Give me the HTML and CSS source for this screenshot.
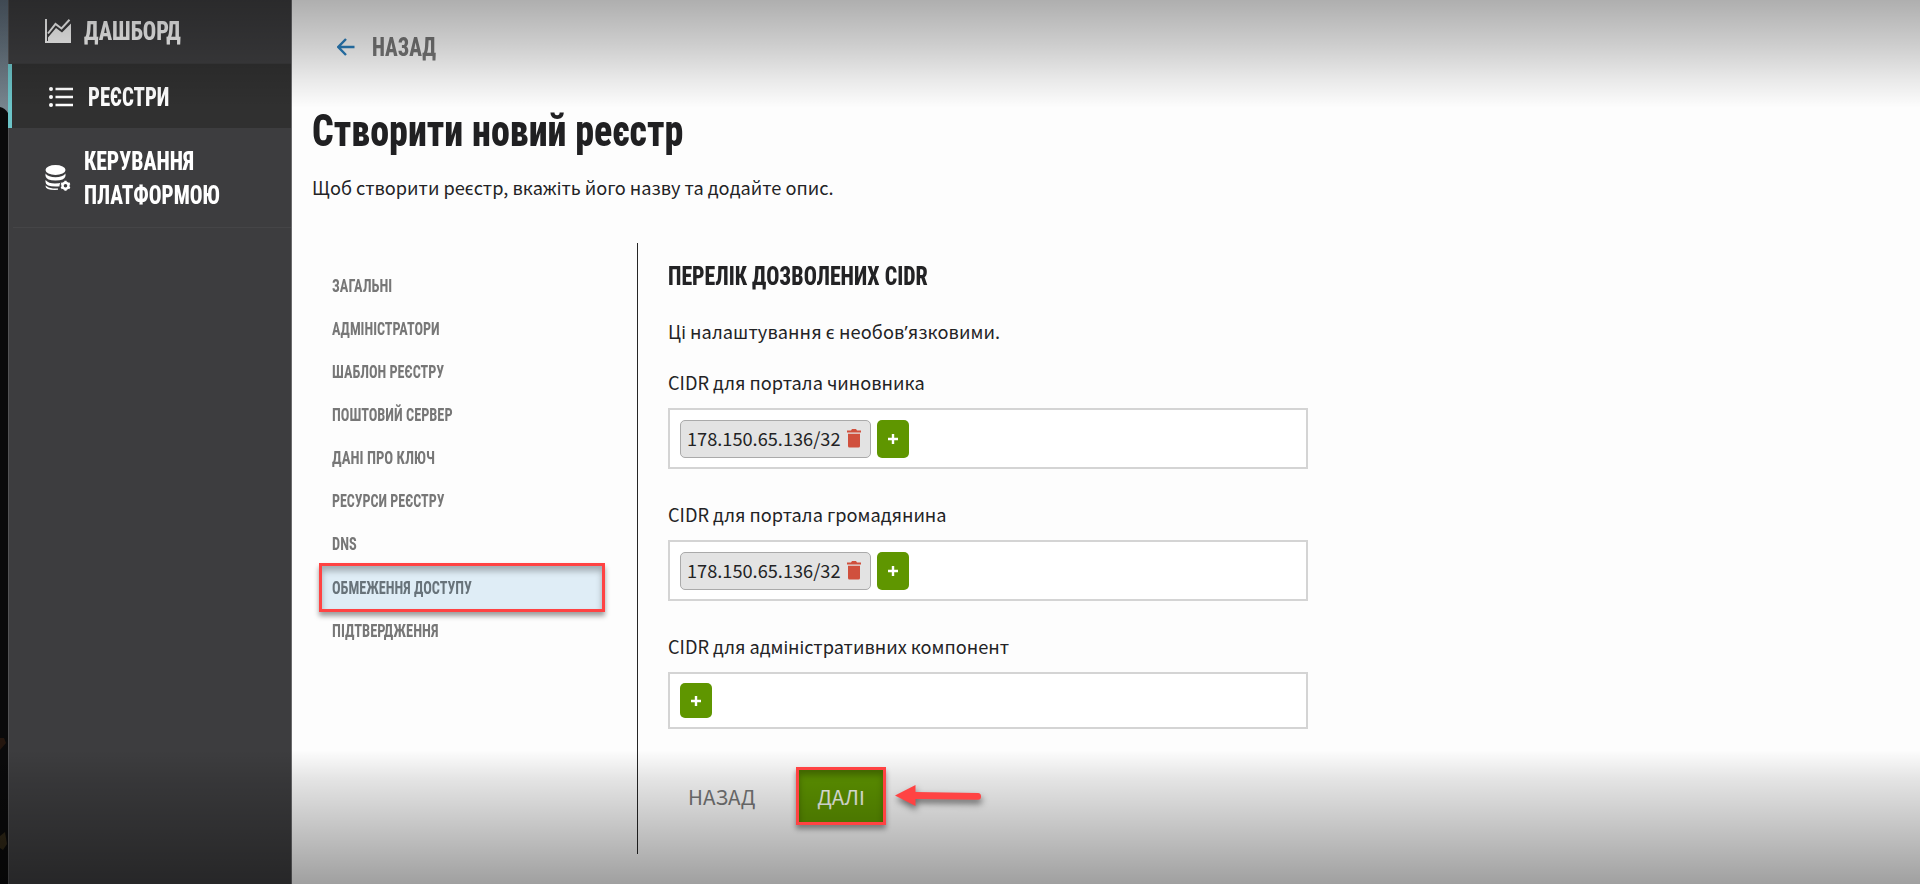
FILE: index.html
```
<!DOCTYPE html>
<html lang="uk">
<head>
<meta charset="utf-8">
<title>Створити новий реєстр</title>
<link rel="stylesheet" href="styles.css">
</head>
<body>
<div class="app">
  <div class="wallpaper">
    <svg width="8" height="884" viewBox="0 0 8 884"><path d="M0 107q5 1 8 6v771H0z" fill="#0a0a0b"/><path d="M0 738h4l2 5-6 7z" fill="#24160e"/><path d="M0 836l5-4 2 12-4 6-3-2z" fill="#2e2616"/></svg>
  </div>
  <nav class="sidebar">
    <a class="side-item">
      <svg class="side-icon" width="26" height="24" viewBox="0 0 26 24"><path d="M1 0v23h25" fill="none" stroke="#fff" stroke-width="2"/><path d="M3 14.500 10.500 5l6 4.500L24.500.8" fill="none" stroke="#fff" stroke-width="2"/><path d="M3 23v-4.500l8-9.500 6 4.500 9-9V23z" fill="#fff"/></svg>
      <span class="narrow" style="--k:.855">ДАШБОРД</span>
    </a>
    <a class="side-item side-item-active">
      <svg class="side-icon" width="25" height="20" viewBox="0 0 25 20"><g fill="#fff"><circle cx="2" cy="2" r="2"/><circle cx="2" cy="10" r="2"/><circle cx="2" cy="18" r="2"/><path d="M6.500.8H24v2.400H6.500zM6.500 8.800H24v2.400H6.500zM6.500 16.800H24v2.400H6.500z"/></g></svg>
      <span class="narrow" style="--k:.8">РЕЄСТРИ</span>
    </a>
    <a class="side-item side-item-tall">
      <svg class="side-icon" width="26" height="26" viewBox="0 0 26 26"><g fill="#fff"><ellipse cx="10.500" cy="5" rx="10" ry="5"/><path d="M.5 8.500q3 3.800 10 3.800t10-3.800V11q-1 4.500-10 4.500T.5 11zM.5 15q3 3.600 9.500 3.600 4 0 7-1l-2 3.600q-2 .3-4 .3Q.5 21.500.5 17z"/><path d="M.5 20.500Q3 23 8 23.400l5 .2v1.200Q.5 25.500.5 21z"/></g><circle cx="20.500" cy="20.700" r="6" fill="#3d3d3f"/><circle cx="20.500" cy="20.700" r="3" fill="none" stroke="#fff" stroke-width="2.400"/><g stroke="#fff" stroke-width="2.200"><path d="M20.500 15.700v2M20.500 23.700v2M16.200 18.200l1.700 1M23.100 22.200l1.700 1M16.200 23.200l1.700-1M23.100 19.200l1.700-1"/></g></svg>
      <span class="stack"><span class="narrow" style="--k:.833">КЕРУВАННЯ</span><span class="narrow" style="--k:.815">ПЛАТФОРМОЮ</span></span>
    </a>
  </nav>
  <main class="main">
    <a class="back">
      <svg width="18" height="18" viewBox="0 0 18 18"><path d="M17.500 9H1.500M9 1 1.300 9 9 17" fill="none" stroke="#2b7fbd" stroke-width="2.400"/></svg>
      <span class="narrow" style="--k:.812">НАЗАД</span>
    </a>
    <h1 class="title"><span class="narrow" style="--k:.846">Створити новий реєстр</span></h1>
    <p class="lead">Щоб створити реєстр, вкажіть його назву та додайте опис.</p>
    <div class="wizard">
      <ul class="steps">
        <li class="step"><span class="narrow" style="--k:.8">ЗАГАЛЬНІ</span></li>
        <li class="step"><span class="narrow" style="--k:.787">АДМІНІСТРАТОРИ</span></li>
        <li class="step"><span class="narrow" style="--k:.789">ШАБЛОН РЕЄСТРУ</span></li>
        <li class="step"><span class="narrow" style="--k:.795">ПОШТОВИЙ СЕРВЕР</span></li>
        <li class="step"><span class="narrow" style="--k:.817">ДАНІ ПРО КЛЮЧ</span></li>
        <li class="step"><span class="narrow" style="--k:.78">РЕСУРСИ РЕЄСТРУ</span></li>
        <li class="step"><span class="narrow" style="--k:.8">DNS</span></li>
        <li class="step step-active"><span class="narrow" style="--k:.792">ОБМЕЖЕННЯ ДОСТУПУ</span></li>
        <li class="step"><span class="narrow" style="--k:.804">ПІДТВЕРДЖЕННЯ</span></li>
      </ul>
      <section class="panel">
        <h2 class="panel-title"><span class="narrow" style="--k:.841">ПЕРЕЛІК ДОЗВОЛЕНИХ CIDR</span></h2>
        <p class="note">Ці налаштування є необов<span class="apos">’</span>язковими.</p>
        <div class="field">
          <label class="label">CIDR для портала чиновника</label>
          <div class="box">
            <span class="tag"><span class="ip">178.150.65.136/32</span><svg width="14" height="19" viewBox="0 0 14 19"><path d="M0 1.500h4L5 0h4l1 1.500h4v2H0zM1 4.800h12V17q0 1.500-1.500 1.500h-9Q1 18.500 1 17z" fill="#d0503d"/></svg></span>
            <button class="add"><svg width="10" height="10" viewBox="0 0 10 10"><path d="M5 0v10M0 5h10" stroke="#fff" stroke-width="2.400"/></svg></button>
          </div>
        </div>
        <div class="field">
          <label class="label">CIDR для портала громадянина</label>
          <div class="box">
            <span class="tag"><span class="ip">178.150.65.136/32</span><svg width="14" height="19" viewBox="0 0 14 19"><path d="M0 1.500h4L5 0h4l1 1.500h4v2H0zM1 4.800h12V17q0 1.500-1.500 1.500h-9Q1 18.500 1 17z" fill="#d0503d"/></svg></span>
            <button class="add"><svg width="10" height="10" viewBox="0 0 10 10"><path d="M5 0v10M0 5h10" stroke="#fff" stroke-width="2.400"/></svg></button>
          </div>
        </div>
        <div class="field">
          <label class="label">CIDR для адміністративних компонент</label>
          <div class="box box-empty">
            <button class="add add-short"><svg width="10" height="10" viewBox="0 0 10 10"><path d="M5 0v10M0 5h10" stroke="#fff" stroke-width="2.400"/></svg></button>
          </div>
        </div>
        <div class="actions">
          <span class="prev">НАЗАД</span>
          <button class="next">ДАЛІ</button>
          <svg class="pointer" width="88" height="22" viewBox="0 0 88 22"><path d="M0 10.500 20.500 0v7L83 8q3 .4 3 3.400 0 3.300-3 3.300l-62.500-.6V21z" fill="#ff4343"/></svg>
        </div>
      </section>
    </div>
  </main>
  <div class="shade"></div>
</div>
</body>
</html>
```
FILE: styles.css
```
* { box-sizing: border-box; }
body {
  margin: 0;
  background: #fdfdfd;
  color: #232325;
  font: 18.2px/24px "Noto Sans CJK SC", "Noto Sans", sans-serif;
}
h1, h2, p, ul { margin: 0; padding: 0; }
ul { list-style: none; }
button { border: 0; padding: 0; font: inherit; }
svg { display: block; flex: none; }

.app { position: relative; display: flex; width: 1920px; height: 884px; overflow: hidden; }

/* Condensed headings: --k narrows each string to its set width */
.narrow {
  display: inline-block;
  font-family: Roboto, sans-serif;
  font-weight: 800;
  font-stretch: 75%;
  white-space: nowrap;
  transform: scaleX(var(--k));
  transform-origin: 0 50%;
}

.wallpaper { flex: none; width: 8px; background: linear-gradient(#5c6a78 0, #78868f 110px); }

.sidebar {
  flex: none;
  width: 284px;
  background: #3d3d3f;
  border-left: 1px solid #535355;
  border-right: 1px solid #6b6b6d;
  color: #fff;
  font-size: 26px;
}
.side-item { display: flex; align-items: center; gap: 13px; height: 64px; padding: 0 0 1px 36px; border-bottom: 1px solid #39393b; }
.side-item-active { gap: 14px; margin-left: -1px; padding: 1px 0 0 37px; background: #303030; border-left: 4px solid #6cc4c8; border-bottom: 0; }
.side-item-tall { height: 100px; margin-left: 4px; padding: 1px 0 0 32px; border-bottom: 1px solid #454547; }
.side-item .narrow { line-height: 34px; }
.stack { display: flex; flex-direction: column; }

.main { flex: 1; padding: 27px 0 0 20px; }
.back { display: flex; align-items: center; gap: 17px; height: 40px; padding-left: 25px; color: #777; font-size: 26px; }
.title { height: 60px; margin-top: 30px; font-size: 45px; line-height: 60px; color: #202022; }
.lead { margin-top: 18px; }

.wizard { display: flex; margin-top: 44px; }
.steps { width: 326px; height: 611px; padding: 21px 0 0 10px; border-right: 1.5px solid #262626; font-size: 18px; color: #777; }
.steps .narrow { font-weight: 700; }
.step { display: flex; align-items: center; width: 280px; height: 43.15px; padding-left: 10px; }
.step-active {
  position: relative;
  background: #dfedf6;
  color: #68737a;
}
.step-active::after, .next::after {
  content: "";
  position: absolute;
  z-index: 3;
  inset: -3px;
  border: 3px solid #ff4343;
  box-shadow: 0 4px 5px rgba(0, 0, 0, .38), inset 0 5px 6px rgba(0, 0, 0, .28);
}

.panel { padding: 15px 0 0 30px; }
.panel-title { height: 32px; font-size: 26px; line-height: 32px; }
.note { margin-top: 29px; letter-spacing: .08px; }
.apos { font-family: "Noto Sans", sans-serif; }
.field { height: 132px; }
.note + .field { margin-top: 26px; }
.label { display: block; height: 38px; }
.box { display: flex; align-items: center; gap: 6px; width: 640px; height: 61px; padding-left: 10px; border: 2px solid #d4d4d4; background: #fff; }
.box-empty { height: 57px; }
.tag { display: flex; align-items: center; gap: 7px; width: 191px; height: 38px; padding-left: 6px; border: 1px solid #aaa; border-radius: 5px; background: #e3e3e3; }
.ip { width: 153px; padding-bottom: 1px; white-space: nowrap; }
.add { display: flex; align-items: center; justify-content: center; width: 32px; height: 38px; border-radius: 5px; background: #5f9600; }
.add-short { height: 35px; }

.actions { display: flex; align-items: center; height: 58px; margin-top: 1px; padding-left: 20px; font-size: 20.5px; }
.prev { width: 111px; padding-bottom: 1px; color: #777; }
.next { position: relative; width: 84px; height: 52px; padding-bottom: 1px; background: #5f9600; color: #f2f7ec; }
.pointer { position: relative; z-index: 3; margin-left: 12px; filter: drop-shadow(1px 4px 3px rgba(0, 0, 0, .5)); overflow: visible; }

/* Player chrome fades at the top and bottom edges */
.shade {
  position: absolute;
  z-index: 2;
  inset: 0;
  pointer-events: none;
  background:
    linear-gradient(rgba(0, 0, 0, .31), rgba(0, 0, 0, .19) 45px, rgba(0, 0, 0, .08) 80px, transparent 108px),
    linear-gradient(transparent 750px, rgba(0, 0, 0, .1) 780px, rgba(0, 0, 0, .37));
}
```
